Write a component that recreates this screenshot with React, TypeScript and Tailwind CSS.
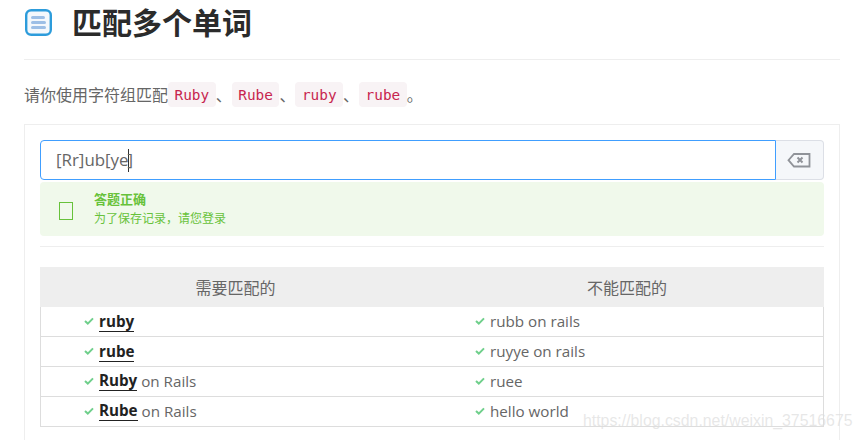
const sans = "font-['Open_Sans','Noto_Sans_CJK_SC',sans-serif]"

const rows = [
  { bold: "ruby", rest: "", other: "rubb on rails" },
  { bold: "rube", rest: "", other: "ruyye on rails" },
  { bold: "Ruby", rest: " on Rails", other: "ruee" },
  { bold: "Rube", rest: " on Rails", other: "hello world" },
]

function Check() {
  return (
    <svg viewBox="0 0 10 8" className="h-2 w-2.5 shrink-0 mr-[5px]">
      <path d="M1 4 L3.8 6.6 L9 1.4" fill="none" stroke="#6fcf8b" strokeWidth="2" />
    </svg>
  )
}

function Code({ children }: { children: string }) {
  return (
    <code className="inline-block h-[25px] w-[47.7px] rounded bg-[#f8f3f5] text-center font-['DejaVu_Sans_Mono',monospace] text-[14.4px] leading-[27px] text-[#c7254e]">
      {children}
    </code>
  )
}

export default function App() {
  return (
    <div className={`h-[440px] w-[863px] overflow-hidden bg-white pl-6 pr-[23px] text-[#666] ${sans} relative`}>
      {/* Title */}
      <div className="flex h-[60px] items-start border-b border-[#eee] pt-[9px]">
        <svg viewBox="0 0 27 27" className="ml-px h-[27px] w-[27px]">
          <rect x="1.2" y="1.2" width="24.6" height="24.6" rx="5" fill="#f4f8fc" stroke="#2d9cdb" strokeWidth="2.4" />
          <rect x="6" y="7" width="14" height="3" rx="1.5" fill="#9dbfe6" />
          <rect x="6" y="12" width="15" height="3" rx="1.5" fill="#9dbfe6" />
          <rect x="6" y="17" width="15" height="3" rx="1.5" fill="#9dbfe6" />
        </svg>
        <h1 className="ml-[20px] -mt-[7px] text-[30px] leading-[42px] font-bold text-[#2b2b2b]">匹配多个单词</h1>
      </div>

      {/* Task line */}
      <p className="mt-[22px] flex h-[25px] items-center text-[16px]">
        <span>请你使用字符组匹配</span>
        <Code>Ruby</Code>
        <span className="w-[16px]">、</span>
        <Code>Rube</Code>
        <span className="w-[16px]">、</span>
        <Code>ruby</Code>
        <span className="w-[16px]">、</span>
        <Code>rube</Code>
        <span>。</span>
      </p>

      {/* Card */}
      <div className="mt-[17px] h-[400px] border border-[#eee] px-[15px] pt-[15px]">
        <div className="flex h-10">
          <div className="flex flex-1 items-center rounded-l border border-[#409eff] pl-[15px] text-[16.9px]">
            <span>[Rr]ub[ye</span>
            <span className="-mx-px h-[23px] w-px bg-[#333]" />
            <span>]</span>
          </div>
          <div className="flex w-[48px] items-center justify-center rounded-r border border-l-0 border-[#dcdfe6] bg-[#f5f7fa] pr-0.5">
            <svg viewBox="0 0 24 16" className="h-4 w-6">
              <path d="M7 2 H22.5 V14.5 H7 L1.5 8.2 Z" fill="none" stroke="#909399" strokeWidth="1.8" />
              <path d="M10.5 5.5 L15.5 10.5 M15.5 5.5 L10.5 10.5" stroke="#909399" strokeWidth="2" />
            </svg>
          </div>
        </div>

        {/* Success alert */}
        <div className="mt-0.5 flex h-[54px] items-center rounded bg-[#f0f9eb] pl-[19px] text-[#67c23a]">
          <span className="mt-[4px] h-[18px] w-[14px] border border-[#67c23a]" />
          <div className="ml-[21px]">
            <div className="text-[13px] leading-[19px] font-bold">答题正确</div>
            <div className="text-[12px] leading-[19px]">为了保存记录，请您登录</div>
          </div>
        </div>

        <div className="mt-[10px] border-t border-[#eee]" />

        {/* Match table */}
        <div className="mt-5 text-[15.2px]">
          <div className="grid h-10 grid-cols-2 items-center bg-[#eee] pt-px text-center text-[16px]">
            <div className="pr-px">需要匹配的</div>
            <div className="pr-0.5">不能匹配的</div>
          </div>
          {rows.map((row) => (
            <div key={row.other} className="grid h-[30px] grid-cols-2 items-center border-x border-b border-[#ddd] pb-px">
              <div className="flex items-center whitespace-pre pl-[43px]">
                <Check />
                <span className="border-b border-[#222] leading-[20px] font-bold text-[#222]">{row.bold}</span>
                <span>{row.rest}</span>
              </div>
              <div className="flex items-center pl-[43px]">
                <Check />
                <span>{row.other}</span>
              </div>
            </div>
          ))}
        </div>
      </div>

      {/* Watermark */}
      <div className="absolute top-[411px] left-[583px] font-['Liberation_Sans',sans-serif] text-[15.85px] leading-5 whitespace-nowrap text-[#ddd]/70">
        https://blog.csdn.net/weixin_37516675
      </div>
    </div>
  )
}
